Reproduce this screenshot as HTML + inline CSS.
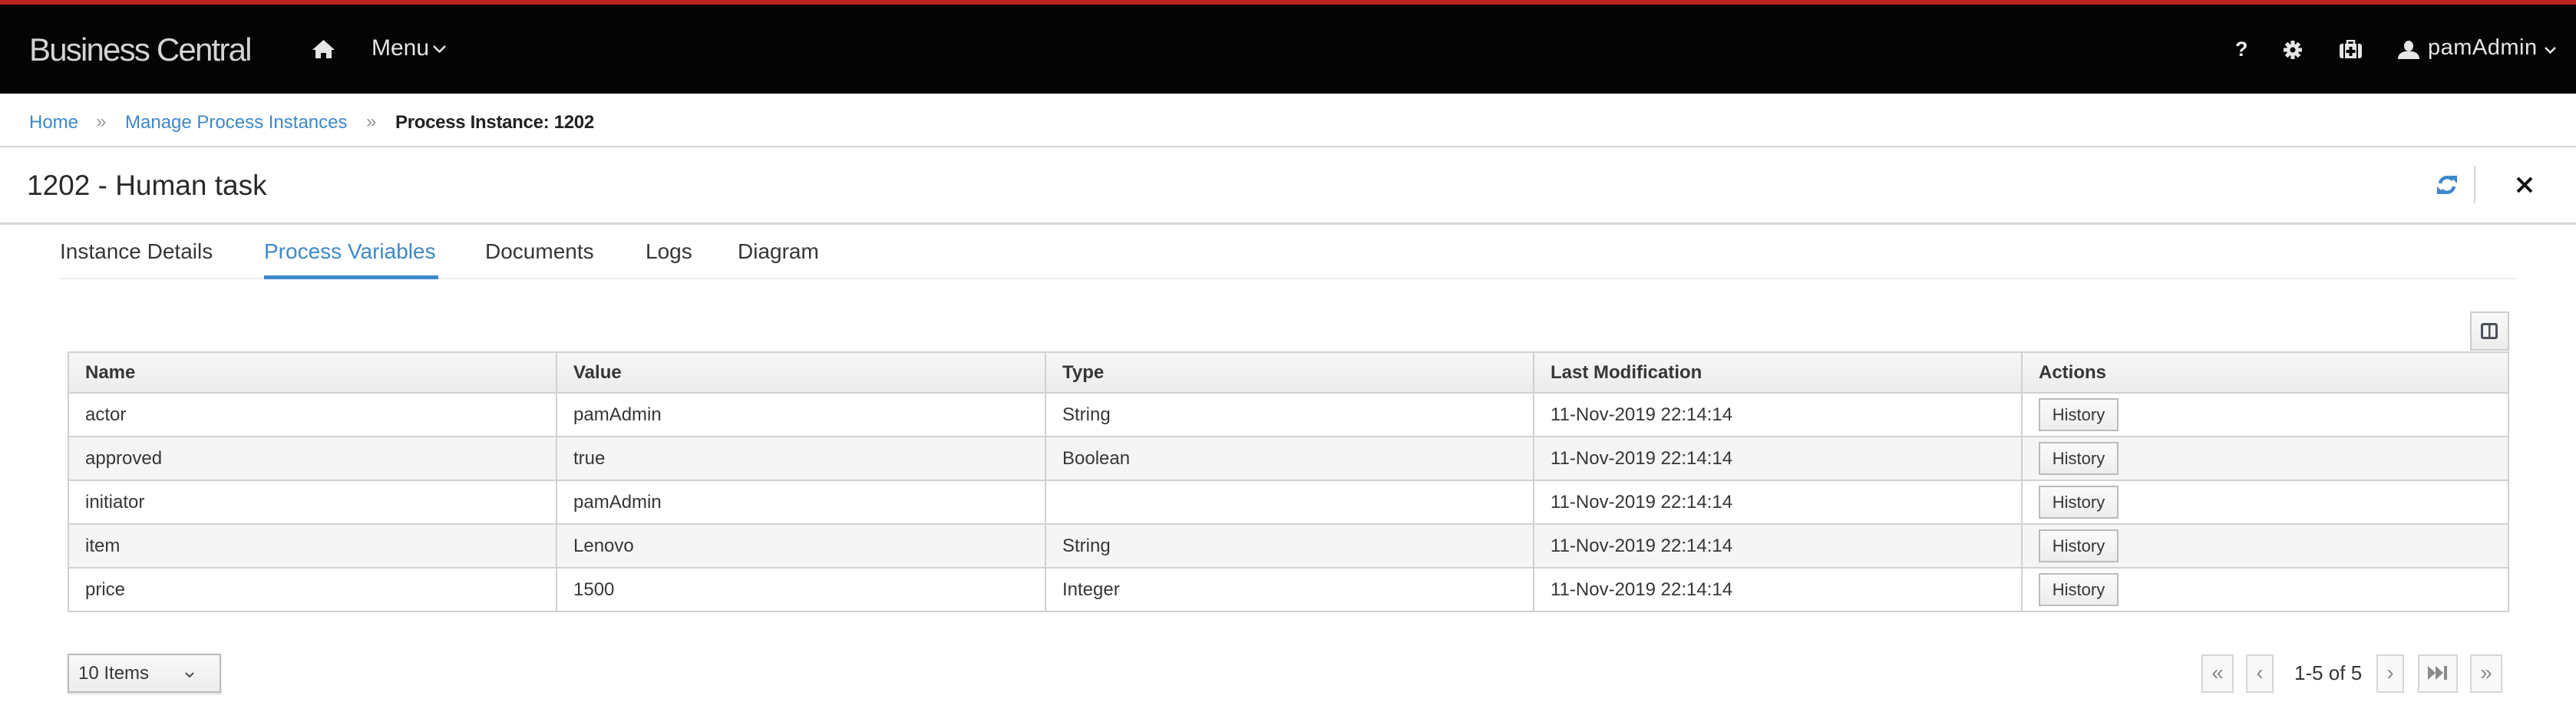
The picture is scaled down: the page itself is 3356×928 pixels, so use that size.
<!DOCTYPE html>
<html><head><meta charset="utf-8"><style>
*{margin:0;padding:0;box-sizing:border-box}
body{width:3356px;height:928px;background:#fff;font-family:"Liberation Sans",sans-serif;color:#363636;position:relative;overflow:hidden}
.a{position:absolute;white-space:nowrap}
.nav{position:absolute;left:0;top:0;width:3356px;height:122px;background:#040404;border-top:6px solid #bd2420}
.blue{color:#3d88c9}
table{position:absolute;left:88px;top:458px;width:3181px;border-collapse:collapse;font-size:24px;color:#363636}
td,th{border:2px solid #d1d1d1;text-align:left;padding:0 0 0 21px;height:57px;vertical-align:middle}
th{height:53px;background:linear-gradient(#f7f7f7,#ececec);font-weight:bold}
tr:nth-child(odd) td{background:#f5f5f5}
.hb{display:inline-block;width:104px;height:43px;border:2px solid #bbb;background:linear-gradient(#fafafa,#ededed);font-size:22px;line-height:39px;text-align:center;color:#363636}
.pb{position:absolute;top:853px;height:50px;border:2px solid #d6d6d6;background:#f8f8f8;color:#8a8a8a;text-align:center;line-height:44px;font-size:28px}
</style></head><body>
<div class="nav"></div>
<div class="a" style="left:38px;top:41px;font-size:42px;color:#d4d4d4;letter-spacing:-1.8px">Business Central</div>
<svg class="a" style="left:407px;top:52px" width="29" height="24" viewBox="0 0 29 24"><path d="M14.5 0L0 13h4v11h7v-7h7v7h7V13h4z" fill="#e6e6e6"/></svg>
<div class="a" style="left:484px;top:46px;font-size:30px;color:#e6e6e6">Menu</div>
<svg class="a" style="left:563px;top:58px" width="19" height="12" viewBox="0 0 19 12"><path d="M2 2l7.5 7.5L17 2" stroke="#e6e6e6" stroke-width="2.5" fill="none"/></svg>
<div class="a" style="left:2912px;top:49px;font-size:27px;font-weight:bold;color:#f0f0f0">?</div>
<svg class="a" style="left:2975px;top:53px" width="24" height="24" viewBox="0 0 24 24"><g fill="#e6e6e6"><circle cx="12" cy="12" r="8"/><rect x="9.5" y="0" width="5" height="24"/><rect x="0" y="9.5" width="24" height="5"/><rect x="9.5" y="0" width="5" height="24" transform="rotate(45 12 12)"/><rect x="9.5" y="0" width="5" height="24" transform="rotate(-45 12 12)"/></g><circle cx="12" cy="12" r="3.5" fill="#040404"/></svg>
<svg class="a" style="left:3048px;top:52px" width="29" height="24" viewBox="0 0 29 24"><path d="M10 5V1h9v4" stroke="#e6e6e6" stroke-width="2.5" fill="none"/><rect x="0" y="5" width="29" height="19" rx="3" fill="#e6e6e6"/><rect x="5" y="5" width="2" height="19" fill="#040404"/><rect x="22" y="5" width="2" height="19" fill="#040404"/><path d="M12.5 9h4v4h4v4h-4v4h-4v-4h-4v-4h4z" fill="#040404"/></svg>
<svg class="a" style="left:3124px;top:53px" width="28" height="24" viewBox="0 0 28 24"><ellipse cx="14" cy="7" rx="6" ry="7" fill="#e6e6e6"/><path d="M0 24c0-6 4-9 9-10h10c5 1 9 4 9 10z" fill="#e6e6e6"/></svg>
<div class="a" style="left:3163px;top:46px;font-size:29px;color:#e6e6e6;letter-spacing:0.5px">pamAdmin</div>
<svg class="a" style="left:3314px;top:60px" width="17" height="11" viewBox="0 0 17 11"><path d="M2 2l6.5 6.5L15 2" stroke="#e6e6e6" stroke-width="2.5" fill="none"/></svg>

<div class="a blue" style="left:38px;top:146px;font-size:24px">Home</div>
<div class="a" style="left:125px;top:145px;font-size:24px;color:#999">»</div>
<div class="a blue" style="left:163px;top:146px;font-size:24px">Manage Process Instances</div>
<div class="a" style="left:477px;top:145px;font-size:24px;color:#999">»</div>
<div class="a" style="left:515px;top:146px;font-size:24px;font-weight:bold;color:#222;letter-spacing:-0.3px">Process Instance: 1202</div>
<div class="a" style="left:0;top:190px;width:3356px;height:2px;background:#d6d6d6"></div>

<div class="a" style="left:35px;top:221px;font-size:37px;color:#292929">1202 - Human task</div>
<svg class="a" style="left:3175px;top:228px" width="26" height="26" viewBox="0 0 26 26"><path d="M4 11A9.5 9.5 0 0 1 20.5 6.5" stroke="#3d88c9" stroke-width="4.5" fill="none"/><path d="M16 1h10v10z" fill="#3d88c9"/><path d="M22 15A9.5 9.5 0 0 1 5.5 19.5" stroke="#3d88c9" stroke-width="4.5" fill="none"/><path d="M10 25H0V15z" fill="#3d88c9"/></svg>
<div class="a" style="left:3223px;top:216px;width:2px;height:49px;background:#d6d6d6"></div>
<svg class="a" style="left:3278px;top:230px" width="22" height="22" viewBox="0 0 22 22"><path d="M2 2l18 18M20 2L2 20" stroke="#111" stroke-width="4"/></svg>
<div class="a" style="left:0;top:290px;width:3356px;height:3px;background:#d6d6d6"></div>

<div class="a" style="left:78px;top:312px;font-size:28px;color:#363636">Instance Details</div>
<div class="a blue" style="left:344px;top:312px;font-size:28px">Process Variables</div>
<div class="a" style="left:632px;top:312px;font-size:28px;color:#363636">Documents</div>
<div class="a" style="left:841px;top:312px;font-size:28px;color:#363636">Logs</div>
<div class="a" style="left:961px;top:312px;font-size:28px;color:#363636">Diagram</div>
<div class="a" style="left:78px;top:362px;width:3200px;height:2px;background:#ededed"></div>
<div class="a" style="left:344px;top:359px;width:227px;height:5px;background:#3d88c9"></div>

<div class="a" style="left:3218px;top:406px;width:51px;height:51px;border:2px solid #ccc;background:linear-gradient(#fafafa,#ececec)"></div>
<svg class="a" style="left:3232px;top:421px" width="22" height="21" viewBox="0 0 22 21"><rect x="1.5" y="1.5" width="19" height="18" rx="1.5" fill="none" stroke="#4d5258" stroke-width="3"/><rect x="10" y="2" width="2.5" height="17" fill="#4d5258"/></svg>

<table>
<colgroup><col style="width:636px"><col style="width:637px"><col style="width:636px"><col style="width:636px"><col></colgroup>
<tr><th>Name</th><th>Value</th><th>Type</th><th>Last Modification</th><th>Actions</th></tr>
<tr><td>actor</td><td>pamAdmin</td><td>String</td><td>11-Nov-2019 22:14:14</td><td><span class="hb">History</span></td></tr>
<tr><td>approved</td><td>true</td><td>Boolean</td><td>11-Nov-2019 22:14:14</td><td><span class="hb">History</span></td></tr>
<tr><td>initiator</td><td>pamAdmin</td><td></td><td>11-Nov-2019 22:14:14</td><td><span class="hb">History</span></td></tr>
<tr><td>item</td><td>Lenovo</td><td>String</td><td>11-Nov-2019 22:14:14</td><td><span class="hb">History</span></td></tr>
<tr><td>price</td><td>1500</td><td>Integer</td><td>11-Nov-2019 22:14:14</td><td><span class="hb">History</span></td></tr>
</table>

<div class="a" style="left:88px;top:852px;width:200px;height:51px;border:2px solid #bbb;background:linear-gradient(#fafafa,#ececec);box-shadow:0 2px 3px rgba(0,0,0,.12)"></div>
<div class="a" style="left:102px;top:864px;font-size:24px;color:#363636">10 Items</div>
<svg class="a" style="left:241px;top:876px" width="12" height="8" viewBox="0 0 12 8"><path d="M1 1l5 5 5-5" stroke="#363636" stroke-width="1.8" fill="none"/></svg>

<div class="pb" style="left:2868px;width:42px">«</div>
<div class="pb" style="left:2926px;width:36px">‹</div>
<div class="a" style="left:2989px;top:862px;font-size:26px;color:#363636">1-5 of 5</div>
<div class="pb" style="left:3096px;width:36px">›</div>
<div class="pb" style="left:3150px;width:52px"><svg width="26" height="18" viewBox="0 0 26 18" style="margin-top:13px"><path d="M0 0l10 9-10 9zM10 0l10 9-10 9z" fill="#8a8a8a"/><rect x="21" y="0" width="4" height="18" fill="#8a8a8a"/></svg></div>
<div class="pb" style="left:3218px;width:42px">»</div>
</body></html>
